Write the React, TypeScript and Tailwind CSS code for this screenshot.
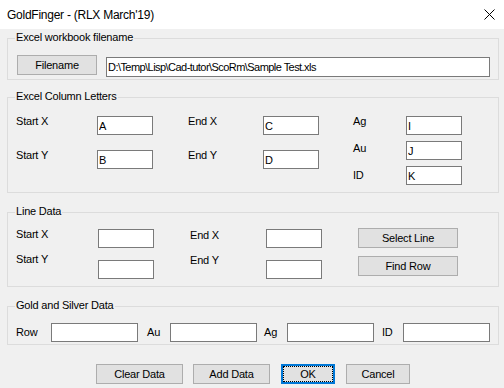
import React from "react";

type GroupProps = { label: string; className: string; children: React.ReactNode };

function Group({ label, className, children }: GroupProps) {
  return (
    <div className={`relative ml-[7px] w-[492px] border border-[#dcdcdc] ${className}`}>
      <span className="absolute -top-[8px] left-[7px] bg-[#f0f0f0] px-[1px] leading-[13px]">{label}</span>
      {children}
    </div>
  );
}

function Box({ value = "", w = "w-[56px]", h = "h-[19px]", extra = "" }: { value?: string; w?: string; h?: string; extra?: string }) {
  return (
    <input
      readOnly
      defaultValue={value}
      className={`${w} ${h} ${extra} border border-[#7a7a7a] bg-white px-[1px] text-[11px] leading-[13px] text-black outline-none`}
    />
  );
}

function Btn({ children, w, h = "h-[20px]" }: { children: React.ReactNode; w: string; h?: string }) {
  return (
    <button className={`${w} ${h} border border-[#adadad] bg-[#e1e1e1] text-[11px] leading-[13px] text-black`}>
      {children}
    </button>
  );
}

export default function App() {
  return (
    <div className="w-[504px] h-[388px] overflow-hidden bg-[#f0f0f0] font-['Liberation_Sans',Arial,sans-serif] text-[11px] leading-[13px] tracking-[-0.2px] text-black">
      {/* title bar */}
      <div className="flex h-[29px] items-center justify-between bg-white pl-[7px] pr-[9px]">
        <span className="text-[12px] leading-[14px] tracking-[-0.25px]">GoldFinger - (RLX March'19)</span>
        <svg width="11" height="11" viewBox="0 0 11 11" className="block">
          <path d="M0.5 0.5 L10.5 10.5 M10.5 0.5 L0.5 10.5" stroke="#000" strokeWidth="1" fill="none" />
        </svg>
      </div>

      <Group label="Excel workbook filename" className="mt-[9px] h-[42px]">
        <div className="flex items-start pl-[9px] pt-[16px]">
          <Btn w="w-[80px]">Filename</Btn>
          <div className="ml-[9px] mt-[2px]">
            <Box value="D:\Temp\Lisp\Cad-tutor\ScoRm\Sample Test.xls" w="w-[384px]" h="h-[20px]" extra="tracking-[-0.55px]" />
          </div>
        </div>
      </Group>

      <Group label="Excel Column Letters" className="mt-[17px] h-[96px]">
        <div className="flex items-start pl-[8px]">
          <div className="flex w-[81px] flex-col gap-[21px] pt-[17px]">
            <span>Start X</span>
            <span>Start Y</span>
          </div>
          <div className="flex w-[56px] flex-col gap-[15px] pt-[18px]">
            <Box value="A" />
            <Box value="B" />
          </div>
          <div className="ml-[35px] flex w-[75px] flex-col gap-[21px] pt-[17px]">
            <span>End X</span>
            <span>End Y</span>
          </div>
          <div className="flex w-[56px] flex-col gap-[15px] pt-[18px]">
            <Box value="C" />
            <Box value="D" />
          </div>
          <div className="ml-[34px] flex w-[53px] flex-col gap-[14px] pt-[17px]">
            <span>Ag</span>
            <span>Au</span>
            <span>ID</span>
          </div>
          <div className="flex w-[56px] flex-col gap-[6px] pt-[18px]">
            <Box value="I" />
            <Box value="J" />
            <Box value="K" />
          </div>
        </div>
      </Group>

      <Group label="Line Data" className="mt-[19px] h-[75px]">
        <div className="flex items-start pl-[8px]">
          <div className="flex w-[82px] flex-col gap-[12px] pt-[15px]">
            <span>Start X</span>
            <span>Start Y</span>
          </div>
          <div className="flex w-[56px] flex-col gap-[12px] pt-[16px]">
            <Box />
            <Box />
          </div>
          <div className="ml-[36px] flex w-[76px] flex-col gap-[12px] pt-[16px]">
            <span>End X</span>
            <span>End Y</span>
          </div>
          <div className="flex w-[56px] flex-col gap-[12px] pt-[16px]">
            <Box />
            <Box />
          </div>
          <div className="ml-[36px] flex w-[100px] flex-col gap-[8px] pt-[15px]">
            <Btn w="w-[100px]">Select Line</Btn>
            <Btn w="w-[100px]">Find Row</Btn>
          </div>
        </div>
      </Group>

      <Group label="Gold and Silver Data" className="mt-[19px] h-[39px]">
        <div className="mt-[16px] flex h-[19px] items-center pl-[8px]">
          <span className="w-[35px]">Row</span>
          <Box w="w-[87px]" />
          <span className="ml-[9px] w-[23px]">Au</span>
          <Box w="w-[87px]" />
          <span className="ml-[7px] w-[23px]">Ag</span>
          <Box w="w-[87px]" />
          <span className="ml-[8px] w-[21px]">ID</span>
          <Box w="w-[87px]" />
        </div>
      </Group>

      {/* dialog buttons */}
      <div className="mt-[19px] flex pl-[96px]">
        <Btn w="w-[87px]">Clear Data</Btn>
        <div className="ml-[10px]">
          <Btn w="w-[77px]">Add Data</Btn>
        </div>
        <button className="ml-[11px] h-[20px] w-[54px] border-2 border-[#0078d7] bg-[#e1e1e1] text-[11px] leading-[13px]">
          <span className="flex h-full w-full items-center justify-center border border-dotted border-black">OK</span>
        </button>
        <div className="ml-[11px]">
          <Btn w="w-[64px]">Cancel</Btn>
        </div>
      </div>
    </div>
  );
}
